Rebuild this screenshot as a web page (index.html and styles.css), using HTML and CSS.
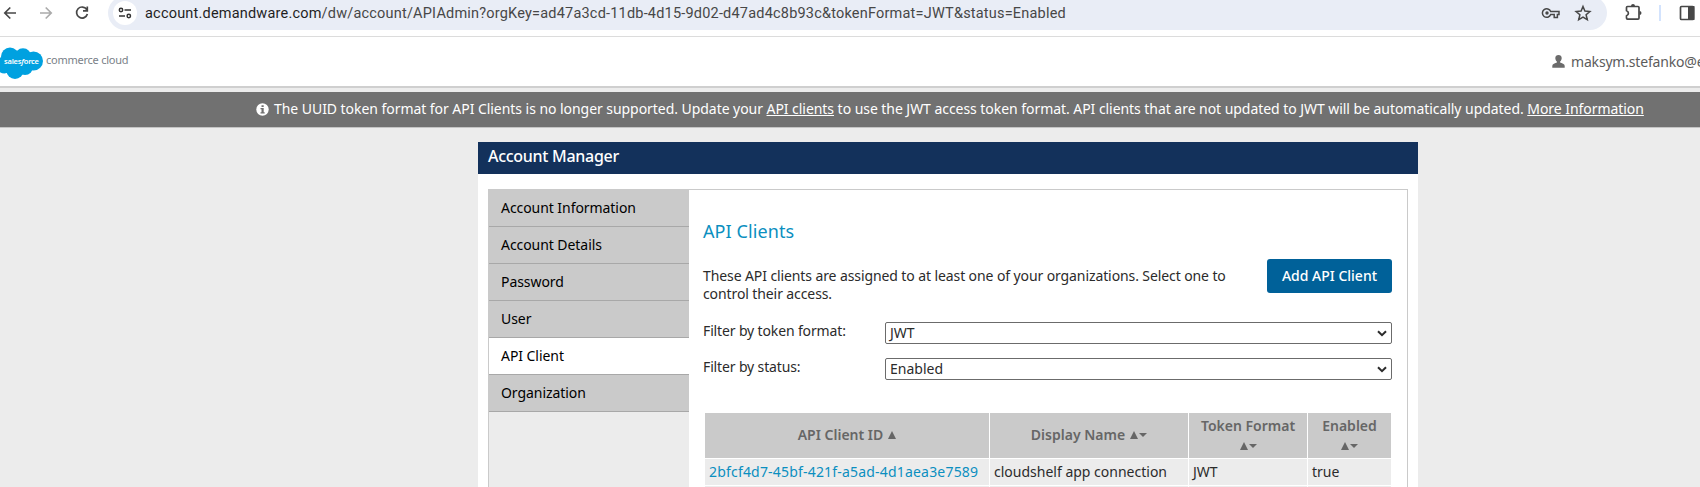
FILE: index.html
```html
<!DOCTYPE html>
<html lang="en">
<head>
<meta charset="utf-8">
<title>Account Manager</title>
<link rel="stylesheet" href="styles.css">
</head>
<body>
<div class="toolbar">
  <svg class="nav" width="108" height="26" viewBox="0 0 108 26" fill="none" stroke="#474747" stroke-width="1.7">
    <path d="M16 13H5M10.300 7.500 4.800 13l5.500 5.500"/>
    <path stroke="#ababab" d="M40 13h11M45.700 7.500l5.500 5.500-5.500 5.500"/>
    <path d="M86.700 9.500A5.500 5.500 0 1 0 87.400 14M87.300 6.600v4.300H83"/>
  </svg>
  <div class="address">
    <span class="site">
      <svg width="14" height="12" viewBox="0 0 14 12" fill="none" stroke="#333" stroke-width="1.500"><circle cx="3" cy="3" r="1.700"/><path d="M6.500 3H13M1 9h6"/><circle cx="10.800" cy="9" r="1.700"/></svg>
    </span>
    <span class="url"><span class="host">account.demandware.com</span>/dw/account/APIAdmin?orgKey=ad47a3cd-11db-4d15-9d02-d47ad4c8b93c&amp;tokenFormat=JWT&amp;status=Enabled</span>
    <svg class="pill-icons" width="52" height="18" viewBox="0 0 52 18" fill="none" stroke="#474747" stroke-width="1.500">
      <path d="M9.700 7.500H18v3.100h-1.600v2.800h-3.200v-2.800H9.700A4.300 4.300 0 1 1 9.700 7.500Z"/><circle cx="6" cy="9" r="1.700" fill="#474747" stroke="none"/>
      <path d="m42 2.500 1.900 4.600 5 .4-3.800 3.300 1.200 4.900L42 13.100l-4.300 2.600 1.200-4.900-3.800-3.300 5-.4Z"/>
    </svg>
  </div>
  <svg class="tools" width="77" height="26" viewBox="0 0 77 26" fill="none" stroke="#474747" stroke-width="1.700">
    <path d="M5 6.500h10q1 0 1 1V18q0 1.200-1 1.200H4.500q-1 0-1-1.200v-2.300q1.900-.5 1.900-2.500t-1.900-2.500V7.500q0-1 1-1Z" stroke-linejoin="round"/><path fill="#474747" stroke="none" d="M8 6a2 2 0 0 1 4 0ZM16.500 11a2 2 0 0 1 0 4Z"/>
    <path stroke="#d3e3fd" stroke-width="2" d="M37 5v16"/>
    <rect x="57.500" y="6.500" width="13" height="13" rx="1"/><path fill="#474747" stroke="none" d="M65 6h6.500v14H65Z"/>
  </svg>
</div>
<header class="header">
  <div class="brand">
    <svg width="43" height="33" viewBox="0 0 43 33"><g fill="#00a1e0"><circle cx="10" cy="9.500" r="9"/><circle cx="23" cy="9.500" r="8.300"/><circle cx="33.500" cy="14" r="9.500"/><circle cx="4.500" cy="18" r="8.500"/><circle cx="15" cy="23.500" r="8.500"/><circle cx="25" cy="20" r="8"/></g><text class="logo-text" x="4" y="17" textLength="35">sales<tspan font-style="italic">f</tspan>orce</text></svg>
    <span class="brand-name">commerce cloud</span>
  </div>
  <div class="user">
    <svg width="13" height="13" viewBox="0 0 13 13" fill="#6b6b6b"><path d="M6.500 0C4.600 0 3.300 1.300 3.300 3c0 1.500.6 2.800 1.600 3.600v.9C2 8.400.3 9.300.3 11v1.700h12.400V11c0-1.700-1.700-2.600-4.600-3.500v-.9C9.100 5.800 9.700 4.500 9.700 3c0-1.700-1.300-3-3.200-3Z"/></svg>
    <span class="user-name">maksym.stefanko@e</span>
  </div>
</header>
<div class="notice">
  <svg width="13" height="13" viewBox="0 0 13 13"><circle cx="6.500" cy="6.500" r="6.200" fill="#fff"/><path fill="#707070" d="M5.500 2.200h2.200v1.900H5.500ZM4.500 5h3.200v4.200h1v1.300H4.500V9.200h1V6.300h-1Z"/></svg>
  <span class="notice-text">The UUID token format for API Clients is no longer supported. Update your <a>API clients</a> to use the JWT access token format. API clients that are not updated to JWT will be automatically updated. <a>More Information</a></span>
</div>
<main class="panel">
  <h1 class="panel-title"><span>Account Manager</span></h1>
  <div class="box">
    <nav class="menu">
      <a class="item">Account Information</a>
      <a class="item">Account Details</a>
      <a class="item">Password</a>
      <a class="item">User</a>
      <a class="item active">API Client</a>
      <a class="item">Organization</a>
    </nav>
    <section class="content">
      <h2 class="title">API Clients</h2>
      <div class="intro">
        <p class="desc">These API clients are assigned to at least one of your organizations. Select one to<br>control their access.</p>
        <button class="add"><span>Add API Client</span></button>
      </div>
      <div class="filter"><span class="label">Filter by token format:</span><div class="select"><span>JWT</span><svg class="chev" width="10" height="7" viewBox="0 0 10 7"><path d="m1 1.200 4 4 4-4"/></svg></div></div>
      <div class="filter"><span class="label">Filter by status:</span><div class="select"><span>Enabled</span><svg class="chev" width="10" height="7" viewBox="0 0 10 7"><path d="m1 1.200 4 4 4-4"/></svg></div></div>
      <div class="table">
        <div class="th"><span>API Client ID</span><svg class="sort" width="8" height="8"><path d="M0 8 4 0l4 8Z"/></svg></div>
        <div class="th"><span>Display Name</span><svg class="sort" width="17" height="8"><path d="M0 8 4 0l4 8ZM9 2h8l-4 4Z"/></svg></div>
        <div class="th stacked"><span>Token Format</span><svg class="sort" width="17" height="8"><path d="M0 8 4 0l4 8ZM9 2h8l-4 4Z"/></svg></div>
        <div class="th stacked"><span>Enabled</span><svg class="sort" width="17" height="8"><path d="M0 8 4 0l4 8ZM9 2h8l-4 4Z"/></svg></div>
        <div class="td id">2bfcf4d7-45bf-421f-a5ad-4d1aea3e7589</div>
        <div class="td">cloudshelf app connection</div>
        <div class="td">JWT</div>
        <div class="td">true</div>
        <div class="td next"></div><div class="td next"></div><div class="td next"></div><div class="td next"></div>
      </div>
    </section>
  </div>
</main>
</body>
</html>
```
FILE: styles.css
```css
* { box-sizing: border-box; }
html { overflow: hidden; }
body {
  margin: 0;
  height: 487px;
  overflow: hidden;
  background: #ececec;
  font: 14px/18px "Noto Sans", sans-serif;
  color: #2b2b2b;
}
svg { display: block; flex: none; }
.toolbar {
  display: flex;
  height: 37px;
  background: #fff;
  border-bottom: 1px solid #dcdcdc;
}
.address {
  display: flex;
  flex: none;
  align-items: center;
  width: 1499px;
  height: 34px;
  margin-top: -4px;
  padding: 0 14px 0 5px;
  border-radius: 17px;
  background: #e9edf6;
}
.site {
  display: flex;
  align-items: center;
  justify-content: center;
  width: 24px;
  height: 24px;
  border-radius: 50%;
  background: #fff;
}
.url {
  margin-left: 8px;
  padding-top: 2px;
  font: 14.5px/20px Roboto, sans-serif;
  letter-spacing: 0.2px;
  color: #474747;
  white-space: nowrap;
}
.host { color: #1f1f1f; }
.pill-icons { margin-left: auto; }
.tools { margin-left: 16px; }
.header {
  display: flex;
  justify-content: space-between;
  height: 51px;
  background: #fff;
  border-bottom: 2px solid #cfcfcf;
}
.brand { display: flex; padding-top: 10px; }
.logo-text {
  font: 600 7.5px "Noto Sans", sans-serif;
  fill: #fff;
}
.brand-name {
  margin: 4px 0 0 3px;
  font-size: 11px;
  letter-spacing: -0.25px;
  color: #7a7f88;
}
.user {
  display: flex;
  align-items: center;
  gap: 6px;
  width: 148px;
  overflow: hidden;
  color: #5c5c5c;
  letter-spacing: -0.18px;
  white-space: nowrap;
}
.notice {
  display: flex;
  align-items: center;
  gap: 5px;
  height: 36px;
  margin-top: 4px;
  padding: 0 0 1px 256px;
  background: #717171;
  border-bottom: 1px solid #c4c4c4;
  color: #fff;
  letter-spacing: -0.05px;
  white-space: nowrap;
}
.notice a { text-decoration: underline; }
.panel {
  width: 940px;
  height: 345px;
  margin: 14px 0 0 478px;
  background: #fff;
}
.panel-title {
  height: 32px;
  margin: 0;
  padding: 3px 10px;
  background: #13315b;
  color: #fff;
  font-size: 16px;
  font-weight: 500;
  line-height: 22px;
  letter-spacing: -0.28px;
}
.box {
  display: flex;
  height: 298px;
  margin: 15px 10px 0;
  border: 1px solid #cacaca;
  border-bottom: 0;
}
.menu {
  width: 200px;
  background: #ececec;
}
.item {
  display: block;
  height: 37px;
  padding: 9px 12px;
  background: #cacaca;
  border-bottom: 1px solid #a8a8a8;
  color: #000;
  letter-spacing: -0.06px;
}
.item.active { background: #fff; }
.content {
  width: 703px;
  padding: 29px 0 0 14px;
}
.title {
  margin: 0;
  color: #0b8fc0;
  font-size: 18px;
  font-weight: 400;
  line-height: 24px;
  letter-spacing: 0.1px;
}
.intro {
  display: flex;
  justify-content: space-between;
  height: 63px;
  margin-top: 16px;
}
.desc {
  margin: 8px 0 0;
  letter-spacing: -0.1px;
  white-space: nowrap;
}
.add {
  width: 125px;
  height: 34px;
  padding: 0 0 1px;
  border: 0;
  border-radius: 3px;
  background: #006199;
  color: #fff;
  font: 500 14px "Noto Sans", sans-serif;
}
.filter { display: flex; height: 36px; }
.label { width: 182px; letter-spacing: -0.14px; }
.select {
  display: flex;
  align-items: center;
  justify-content: space-between;
  width: 507px;
  height: 22px;
  padding: 0 4px;
  border: 1px solid #6b6b6b;
  border-radius: 2px;
}
.chev {
  fill: none;
  stroke: #2b2b2b;
  stroke-width: 2;
}
.table {
  display: grid;
  grid-template-columns: 284px 198px 118px 83px;
  grid-template-rows: 45px 26px 1px;
  gap: 1px;
  margin: 19px 0 0 2px;
}
.th {
  display: flex;
  align-items: center;
  justify-content: center;
  gap: 5px;
  padding-bottom: 1px;
  background: #cacaca;
  color: #666;
  font-weight: 600;
}
.stacked {
  flex-direction: column;
  justify-content: flex-start;
  gap: 7px;
  padding-top: 4px;
}
.sort { fill: #666; }
.td {
  padding: 4px;
  background: #ececec;
  white-space: nowrap;
}
.next { padding: 0; }
.id { color: #0b8fc0; letter-spacing: 0.19px; }
```
